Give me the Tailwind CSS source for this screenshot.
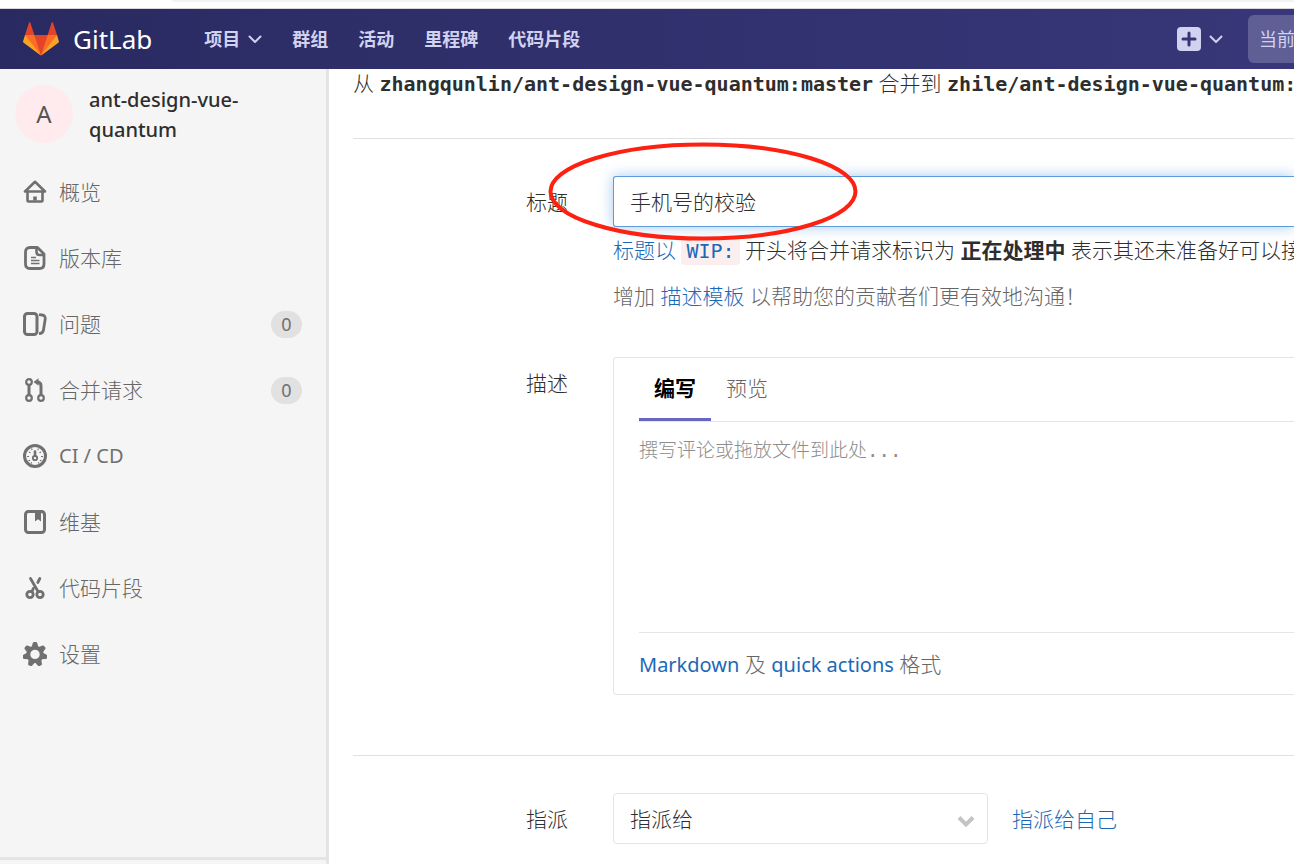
<!DOCTYPE html>
<html lang="zh-CN">
<head>
<meta charset="utf-8">
<title>新建合并请求 · GitLab</title>
<script src="https://cdn.jsdelivr.net/npm/@tailwindcss/browser@4"></script>
</head>
<body class="h-screen overflow-hidden flex flex-col bg-white text-[#2e2e2e] text-[21px] leading-[30px] font-light font-['Noto_Sans','Noto_Sans_CJK_SC',sans-serif]">

<div class="h-[9px] shrink-0 border-b border-[#d8d8dc] pl-[172px]"><div class="h-0.5 bg-[#f1f3f4] rounded-bl"></div></div>

<header class="h-[60px] shrink-0 flex items-center overflow-hidden whitespace-nowrap bg-linear-to-r from-[#2a2a62] to-[#373779] text-[#d1d1f0] pl-[23px]">
  <a href="#" class="flex items-center gap-3.5 text-white text-[26px] font-normal">
    <svg class="size-9" viewBox="0 0 36 36" aria-hidden="true">
      <path fill="#e24329" d="M2 14l9.38 9v-9l-4-12.28c-.205-.632-1.176-.632-1.38 0zM34 14l-9.38 9v-9l4-12.28c.205-.632 1.176-.632 1.38 0zM18 34.38L3 14h30z"/>
      <path fill="#fc6d26" d="M18 34.38L11.38 14H2l4 11zM18 34.38L24.62 14H34l-4 11z"/>
      <path fill="#fca326" d="M2 14L.1 20.16c-.18.565 0 1.2.5 1.56L18 34.38zM34 14l1.9 6.16c.18.565 0 1.2-.5 1.56L18 34.38z"/>
    </svg>
    <span>GitLab</span>
  </a>
  <nav class="flex items-center gap-[30px] ml-[52px] text-[18px] font-bold">
    <button class="flex items-center gap-2">项目
      <svg class="w-3.5 h-3.5" viewBox="0 0 14 14" fill="none" stroke="currentColor" stroke-width="2" stroke-linecap="round" stroke-linejoin="round"><path d="M1.5 4.5L7 10l5.500-5.500"/></svg>
    </button>
    <a href="#">群组</a>
    <a href="#">活动</a>
    <a href="#">里程碑</a>
    <a href="#">代码片段</a>
  </nav>
  <button aria-label="新建" class="ml-auto shrink-0 flex items-center gap-2">
    <svg class="size-6" viewBox="0 0 24 24"><rect width="24" height="24" rx="4" fill="#d1d1f0"/><path d="M12 6v12M6 12h12" stroke="#353577" stroke-width="3" stroke-linecap="round"/></svg>
    <svg class="w-3.5 h-3.5" viewBox="0 0 14 14" fill="none" stroke="currentColor" stroke-width="2" stroke-linecap="round" stroke-linejoin="round"><path d="M1.500 4.500L7 10l5.500-5.500"/></svg>
  </button>
  <button class="ml-[25px] w-[46px] h-12 shrink-0 overflow-hidden rounded-l-md bg-[#5f5f96] pl-[11px] text-left text-[18px] font-normal whitespace-nowrap">当前项目</button>
</header>

<div class="flex-1 min-h-0 flex">
  <aside class="w-[329px] shrink-0 flex flex-col bg-[#f5f5f5] border-r-3 border-[#e4e4e4] text-[#707070]">
    <a href="#" class="flex items-start gap-4 pl-[15px] pt-4 text-[#2e2e2e] text-[20px] font-medium">
      <span class="size-[58px] shrink-0 rounded-full bg-[#ffebee] flex items-center justify-center text-[24px] font-normal text-[#555]">A</span>
      <span class="w-[190px]">ant-design-vue-quantum</span>
    </a>
    <nav class="flex-1 pt-3.5">
      <a href="#" class="h-[66px] pl-[23px] pr-6 flex items-center gap-3">
        <svg class="size-6" viewBox="0 0 24 24" fill="none" stroke="currentColor" stroke-width="2.600" stroke-linejoin="round" stroke-linecap="round"><path d="M12 1.800L2 11.500h20zM4.500 12v8.500q0 1 1 1h13q1 0 1-1V12"/><path d="M12 16.500v4" stroke-width="3.600" stroke-linecap="butt"/></svg>
        <span class="text-[#666]">概览</span></a>
      <a href="#" class="h-[66px] pl-[23px] pr-6 flex items-center gap-3">
        <svg class="size-6" viewBox="0 0 24 24" fill="none" stroke="currentColor" stroke-width="2.800" stroke-linejoin="round"><path d="M7 1.500h7.500L21 8v10q0 4.500-4.500 4.500H7Q2.500 22.500 2.500 18V6Q2.500 1.500 7 1.500z"/><path d="M13.500 1.500V6q0 3 3 3H21" stroke-width="2.600"/><path d="M8 11.500h5M8 14.500h8.500M8 17.500h8.500" stroke-width="1.500"/></svg>
        <span class="text-[#666]">版本库</span></a>
      <a href="#" class="h-[66px] pl-[23px] pr-6 flex items-center gap-3">
        <svg class="size-6" viewBox="0 0 24 24" fill="none" stroke="currentColor" stroke-width="3" stroke-linejoin="round"><rect x="1.500" y="1.500" width="12.500" height="21" rx="3"/><path d="M16 2.700l3 .3q3.700.5 3.200 4l-1.700 11q-.5 3.500-4.500 3.700" stroke-width="2.800"/></svg>
        <span class="text-[#666]">问题</span><span class="ml-auto w-[31px] h-[27px] rounded-full bg-[#e1e1e1] text-[18px] leading-[27px] text-center font-normal">0</span></a>
      <a href="#" class="h-[66px] pl-[23px] pr-6 flex items-center gap-3">
        <svg class="size-6" viewBox="0 0 24 24" fill="none" stroke="currentColor" stroke-width="2.600"><circle cx="6" cy="4" r="2.800" stroke-width="2.200"/><circle cx="6" cy="20" r="2.800" stroke-width="2.200"/><circle cx="18" cy="20" r="2.800" stroke-width="2.200"/><path d="M6 7v10M18 17V8q0-4-4-4" stroke-width="3"/><path d="M10.500 4l5-3.800v7.600z" fill="currentColor" stroke="none"/></svg>
        <span class="text-[#666]">合并请求</span><span class="ml-auto w-[31px] h-[27px] rounded-full bg-[#e1e1e1] text-[18px] leading-[27px] text-center font-normal">0</span></a>
      <a href="#" class="h-[66px] pl-[23px] pr-6 flex items-center gap-3">
        <svg class="size-6" viewBox="0 0 24 24" fill="none" stroke="currentColor"><circle cx="12" cy="12" r="10.500" stroke-width="3"/><circle cx="12" cy="14" r="2.200" stroke-width="1.800"/><path d="M12 7.500v4.500" stroke-width="2.600" stroke-linecap="round"/><path d="M4 12.500h2M18 12.500h2M6 8l1.500.8M18 8l-1.500.8M5.500 17l1.600-.8M18.500 17l-1.600-.8M8.500 4.500l.7 1.500M15.500 4.500l-.7 1.500M8 19.500l.7-1.200M16 19.500l-.7-1.200" stroke-width="1.100"/></svg>
        <span class="text-[20px] font-normal">CI / CD</span></a>
      <a href="#" class="h-[66px] pl-[23px] pr-6 flex items-center gap-3">
        <svg class="size-6" viewBox="0 0 24 24" fill="none" stroke="currentColor" stroke-width="3"><rect x="2.500" y="1.500" width="19" height="21" rx="3"/><path d="M12 2h6v9.500l-3-2.200-3 2.200z" fill="currentColor" stroke="none"/></svg>
        <span class="text-[#666]">维基</span></a>
      <a href="#" class="h-[66px] pl-[23px] pr-6 flex items-center gap-3">
        <svg class="size-6" viewBox="0 0 24 24" fill="none" stroke="currentColor" stroke-width="2.800" stroke-linecap="round"><circle cx="7" cy="18.500" r="3.200"/><circle cx="17" cy="18.500" r="3.200"/><path d="M7.500 2.500l7.500 13M16.800 2.500l-2 4M10.300 12.500L9 15.500"/></svg>
        <span class="text-[#666]">代码片段</span></a>
      <a href="#" class="h-[66px] pl-[23px] pr-6 flex items-center gap-3">
        <svg class="size-6" viewBox="0 0 24 24" fill="currentColor"><circle cx="12" cy="12.400" r="6.700" fill="none" stroke="currentColor" stroke-width="4"/><g id="teeth"><path id="tooth" d="M8.500 5.500l1.300-4.500q.3-1 1.200-1h2q.9 0 1.200 1l1.300 4.500z"/><use href="#tooth" transform="rotate(51.430 12 12.400)"/><use href="#tooth" transform="rotate(102.860 12 12.400)"/><use href="#tooth" transform="rotate(154.290 12 12.400)"/><use href="#tooth" transform="rotate(205.710 12 12.400)"/><use href="#tooth" transform="rotate(257.140 12 12.400)"/><use href="#tooth" transform="rotate(308.570 12 12.400)"/></g></svg>
        <span class="text-[#666]">设置</span></a>
    </nav>
    <div class="h-[7px] border-t-3 border-[#e4e4e4]"></div>
  </aside>

  <main class="flex-1 min-w-0 overflow-hidden pl-6 whitespace-nowrap">
    <p class="h-[70px] leading-7 border-b border-[#e1e1e1]">从 <span class="font-bold text-[20px] font-['DejaVu_Sans_Mono',monospace]">zhangqunlin/ant-design-vue-quantum:master</span> 合并到 <span class="font-bold text-[20px] font-['DejaVu_Sans_Mono',monospace]">zhile/ant-design-vue-quantum:master</span></p>

    <form>
      <div class="relative grid grid-cols-[215px_1fr] gap-x-[45px] pt-[37px]">
        <label for="title" class="text-right pt-[11px]">标题</label>
        <div class="min-w-0">
          <input id="title" type="text" value="手机号的校验" class="block w-full h-[51px] px-4 pb-0.5 rounded-l-[3px] border border-r-0 border-[#5c9bdc] outline-none font-light shadow-[0_0_14px_rgba(60,140,215,0.45)]">
          <p class="mt-2"><a href="#" class="text-[#1b69b6]">标题以 <code class="inline-block h-7 leading-7 px-[5px] rounded bg-[#fbeeee] font-normal text-[20px] font-['DejaVu_Sans_Mono',monospace]">WIP:</code></a> 开头将合并请求标识为 <strong class="font-bold">正在处理中</strong> 表示其还未准备好可以接受合并</p>
          <p class="mt-4 text-[#666]">增加 <a href="#" class="text-[#1b69b6]">描述模板</a> 以帮助您的贡献者们更有效地沟通！</p>
        </div>
        <svg class="absolute left-[194px] top-[3px] w-[314px] h-[100px] pointer-events-none" viewBox="0 0 314 100" fill="none"><ellipse cx="156" cy="49.500" rx="152.500" ry="47" stroke="#fd2112" stroke-width="4"/></svg>
      </div>

      <div class="grid grid-cols-[215px_1fr] gap-x-[45px] pt-[46px] pb-[60px] border-b border-[#e1e1e1]">
        <label for="description" class="text-right pt-[11px]">描述</label>
        <div class="min-w-0 border border-r-0 border-[#e5e5e5] rounded-l-[4px] pl-[25px]">
          <div class="flex h-16 border-b border-[#e5e5e5]">
            <button type="button" class="w-[72px] h-[63px] border-b-3 border-[#6666c4] text-black font-bold">编写</button>
            <button type="button" class="w-[72px] h-[63px] border-b-3 border-transparent text-[#666]">预览</button>
          </div>
          <textarea id="description" placeholder="撰写评论或拖放文件到此处..." class="block w-full h-[210px] pt-[13px] resize-none outline-none text-[19px] font-light placeholder:text-[#8c8c8c] font-['DejaVu_Sans_Mono','Noto_Sans_CJK_SC',monospace]"></textarea>
          <div class="border-t border-[#e5e5e5] pt-4 pb-3.5 text-[#666]"><a href="#" class="text-[#1b69b6] text-[20px] font-normal">Markdown</a> 及 <a href="#" class="text-[#1b69b6] text-[20px] font-normal">quick actions</a> 格式</div>
        </div>
      </div>

      <div class="grid grid-cols-[215px_1fr] gap-x-[45px] pt-[37px]">
        <label for="assignee" class="text-right pt-[11px]">指派</label>
        <div class="flex items-center gap-6">
          <div class="relative w-[375px]">
            <select id="assignee" class="block w-full h-[51px] pl-4 appearance-none bg-white rounded-[4px] border border-[#e5e5e5] font-light"><option>指派给</option></select>
            <svg class="absolute right-[13px] top-5 w-[18px] h-4 pointer-events-none" viewBox="0 0 18 16" fill="none" stroke="#c4c4c4" stroke-width="4"><path d="M2 4.500l7 7 7-7"/></svg>
          </div>
          <a href="#" class="text-[#1b69b6]">指派给自己</a>
        </div>
      </div>
    </form>
  </main>
</div>
</body>
</html>
